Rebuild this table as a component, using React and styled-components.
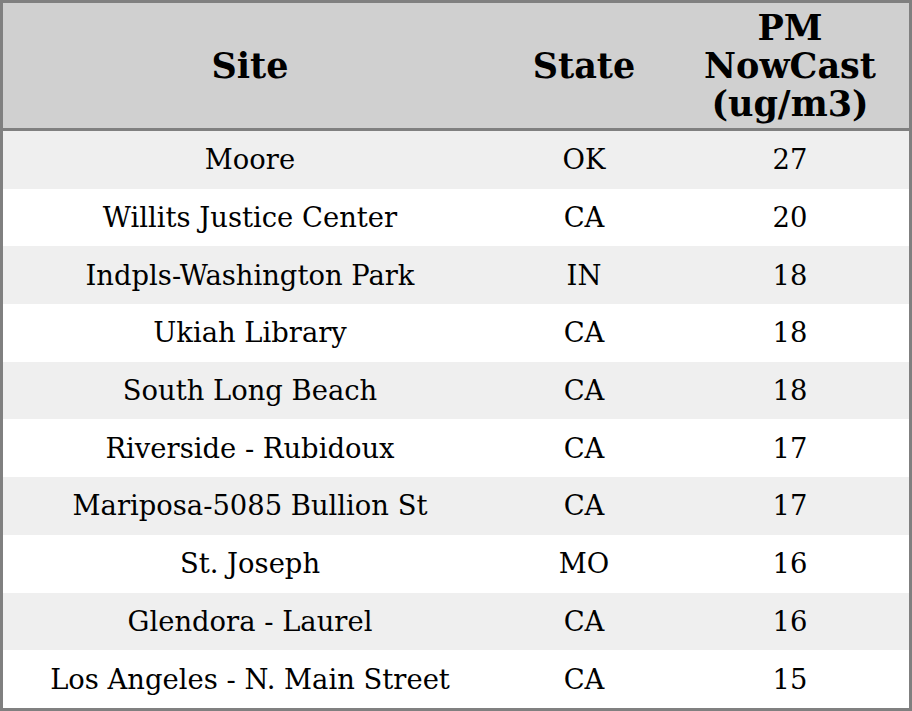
import React from 'react'
import styled, { createGlobalStyle } from 'styled-components'

const GlobalStyle = createGlobalStyle`
  html, body {
    margin: 0;
    padding: 0;
    background: #ffffff;
  }
  body {
    font-family: "DejaVu Serif", serif;
    color: #000000;
  }
`

const Table = styled.table`
  width: 912px;
  height: 711px;
  box-sizing: border-box;
  border: 3px solid #808080;
  border-collapse: separate;
  border-spacing: 0;
  font-family: "DejaVu Serif", serif;
`

const HeadCell = styled.th`
  background: #d0d0d0;
  border-bottom: 3px solid #808080;
  font-size: 35px;
  font-weight: bold;
  line-height: 38px;
  height: 125px;
  padding: 0;
  text-align: center;
  vertical-align: middle;
  width: ${({ w }) => w}px;
`

const Row = styled.tr`
  background: ${({ striped }) => (striped ? '#efefef' : '#ffffff')};
  height: 57.7px;
`

const Cell = styled.td`
  font-size: 27.4px;
  padding: 0;
  text-align: center;
  vertical-align: middle;
`

const sites = [
  ['Moore', 'OK', 27],
  ['Willits Justice Center', 'CA', 20],
  ['Indpls-Washington Park', 'IN', 18],
  ['Ukiah Library', 'CA', 18],
  ['South Long Beach', 'CA', 18],
  ['Riverside - Rubidoux', 'CA', 17],
  ['Mariposa-5085 Bullion St', 'CA', 17],
  ['St. Joseph', 'MO', 16],
  ['Glendora - Laurel', 'CA', 16],
  ['Los Angeles - N. Main Street', 'CA', 15],
]

const App = () => (
  <>
    <GlobalStyle />
    <Table>
      <thead>
        <tr>
          <HeadCell w={494}>Site</HeadCell>
          <HeadCell w={174}>State</HeadCell>
          <HeadCell w={238}>PM<br />NowCast<br />(ug/m3)</HeadCell>
        </tr>
      </thead>
      <tbody>
        {sites.map(([site, state, value], i) => (
          <Row key={site} striped={i % 2 === 0}>
            <Cell>{site}</Cell>
            <Cell>{state}</Cell>
            <Cell>{value}</Cell>
          </Row>
        ))}
      </tbody>
    </Table>
  </>
)

export default App
